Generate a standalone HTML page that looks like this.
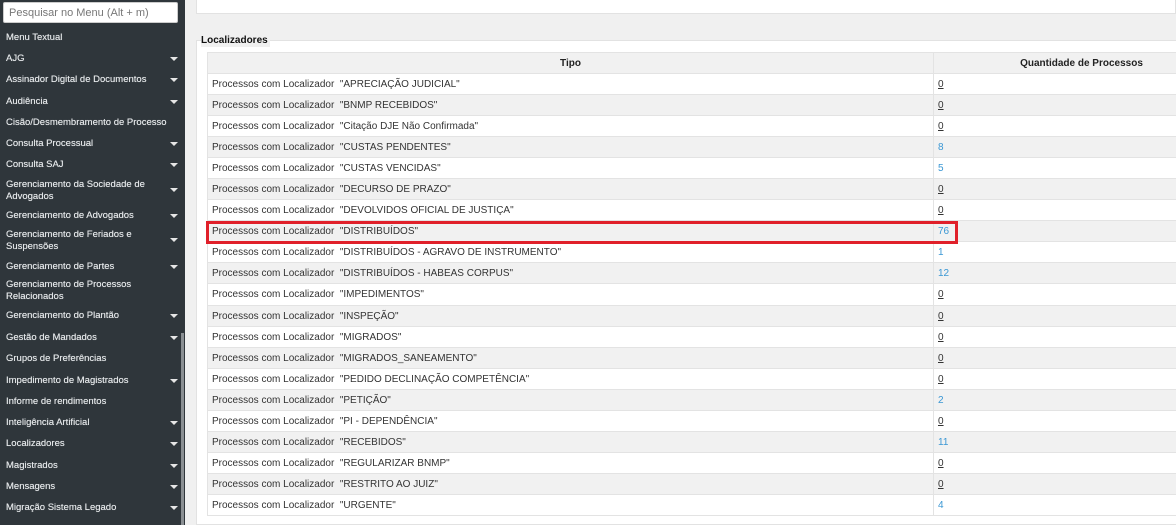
<!DOCTYPE html>
<html><head><meta charset="utf-8"><style>
*{margin:0;padding:0;box-sizing:border-box}
body{width:1176px;height:525px;overflow:hidden;background:#f0f0f0;font-family:"Liberation Sans",sans-serif;position:relative}
#sb{position:absolute;left:0;top:0;width:185px;height:525px;background:#2f363b}
#sb input{position:absolute;left:3px;top:2px;width:175px;height:21px;border:1px solid #ccc;border-radius:2px;background:#fff;font:11px "Liberation Sans",sans-serif;color:#777;padding-left:5px}
.mi{position:absolute;left:6px;width:165px;font-size:9.5px;font-weight:normal;color:#e4e7e9;line-height:12px;white-space:nowrap;text-shadow:0 0 0.4px #e4e7e9}
.ar{position:absolute;left:170px;width:0;height:0;border-left:4px solid transparent;border-right:4px solid transparent;border-top:4px solid #e6e6e6}
#scr{position:absolute;left:181px;top:333px;width:3px;height:192px;background:#8a8f93}
#card{position:absolute;left:196px;top:0;width:980px;height:14px;background:#fff;border:1px solid #e2e2e2;border-top:none}
#fs{position:absolute;left:196px;top:40px;width:985px;height:485px;border:1px solid #e2e2e2;background:#fff}
#leg{position:absolute;left:201px;top:34px;font-size:10px;font-weight:bold;color:#111;background:#f0f0f0;padding-right:2px;line-height:13px}
table{position:absolute;left:207px;top:52px;width:1023px;border-collapse:collapse;font-size:10px;color:#333}
td,th{height:21.1px;border:1px solid #e3e3e3;padding:1px 4px 0;white-space:pre}
th{background:#f1f1f1;font-weight:bold;color:#222;text-align:center;height:20.5px}
tr:nth-child(odd) td{background:#f1f1f1}
td.q{width:296px}
.z{text-decoration:underline;color:#333}
.b{color:#3a97d4}
#red{position:absolute;left:206px;top:221px;width:752px;height:23px;border:3px solid #e0202a}
</style></head><body>
<div id="sb">
<input value="Pesquisar no Menu (Alt + m)">
<div class="mi" style="top:32px">Menu Textual</div>
<div class="mi" style="top:53px">AJG</div><div class="ar" style="top:57px"></div>
<div class="mi" style="top:74px">Assinador Digital de Documentos</div><div class="ar" style="top:78px"></div>
<div class="mi" style="top:96px">Audiência</div><div class="ar" style="top:100px"></div>
<div class="mi" style="top:117px">Cisão/Desmembramento de Processo</div>
<div class="mi" style="top:138px">Consulta Processual</div><div class="ar" style="top:142px"></div>
<div class="mi" style="top:159px">Consulta SAJ</div><div class="ar" style="top:163px"></div>
<div class="mi" style="top:179px">Gerenciamento da Sociedade de<br>Advogados</div><div class="ar" style="top:188px"></div>
<div class="mi" style="top:210px">Gerenciamento de Advogados</div><div class="ar" style="top:214px"></div>
<div class="mi" style="top:229px">Gerenciamento de Feriados e<br>Suspensões</div><div class="ar" style="top:238px"></div>
<div class="mi" style="top:261px">Gerenciamento de Partes</div><div class="ar" style="top:265px"></div>
<div class="mi" style="top:279px">Gerenciamento de Processos<br>Relacionados</div>
<div class="mi" style="top:310px">Gerenciamento do Plantão</div><div class="ar" style="top:314px"></div>
<div class="mi" style="top:332px">Gestão de Mandados</div><div class="ar" style="top:336px"></div>
<div class="mi" style="top:353px">Grupos de Preferências</div>
<div class="mi" style="top:375px">Impedimento de Magistrados</div><div class="ar" style="top:379px"></div>
<div class="mi" style="top:396px">Informe de rendimentos</div>
<div class="mi" style="top:417px">Inteligência Artificial</div><div class="ar" style="top:421px"></div>
<div class="mi" style="top:438px">Localizadores</div><div class="ar" style="top:442px"></div>
<div class="mi" style="top:460px">Magistrados</div><div class="ar" style="top:464px"></div>
<div class="mi" style="top:481px">Mensagens</div><div class="ar" style="top:485px"></div>
<div class="mi" style="top:502px">Migração Sistema Legado</div><div class="ar" style="top:506px"></div>
<div id="scr"></div>
</div>
<div id="card"></div>
<div id="fs"></div>
<div id="leg">Localizadores</div>
<table>
<tr><th>Tipo</th><th>Quantidade de Processos</th></tr>
<tr><td>Processos com Localizador  "APRECIAÇÃO JUDICIAL"</td><td class="q"><span class="z">0</span></td></tr>
<tr><td>Processos com Localizador  "BNMP RECEBIDOS"</td><td class="q"><span class="z">0</span></td></tr>
<tr><td>Processos com Localizador  "Citação DJE Não Confirmada"</td><td class="q"><span class="z">0</span></td></tr>
<tr><td>Processos com Localizador  "CUSTAS PENDENTES"</td><td class="q"><span class="b">8</span></td></tr>
<tr><td>Processos com Localizador  "CUSTAS VENCIDAS"</td><td class="q"><span class="b">5</span></td></tr>
<tr><td>Processos com Localizador  "DECURSO DE PRAZO"</td><td class="q"><span class="z">0</span></td></tr>
<tr><td>Processos com Localizador  "DEVOLVIDOS OFICIAL DE JUSTIÇA"</td><td class="q"><span class="z">0</span></td></tr>
<tr><td>Processos com Localizador  "DISTRIBUÍDOS"</td><td class="q"><span class="b">76</span></td></tr>
<tr><td>Processos com Localizador  "DISTRIBUÍDOS - AGRAVO DE INSTRUMENTO"</td><td class="q"><span class="b">1</span></td></tr>
<tr><td>Processos com Localizador  "DISTRIBUÍDOS - HABEAS CORPUS"</td><td class="q"><span class="b">12</span></td></tr>
<tr><td>Processos com Localizador  "IMPEDIMENTOS"</td><td class="q"><span class="z">0</span></td></tr>
<tr><td>Processos com Localizador  "INSPEÇÃO"</td><td class="q"><span class="z">0</span></td></tr>
<tr><td>Processos com Localizador  "MIGRADOS"</td><td class="q"><span class="z">0</span></td></tr>
<tr><td>Processos com Localizador  "MIGRADOS_SANEAMENTO"</td><td class="q"><span class="z">0</span></td></tr>
<tr><td>Processos com Localizador  "PEDIDO DECLINAÇÃO COMPETÊNCIA"</td><td class="q"><span class="z">0</span></td></tr>
<tr><td>Processos com Localizador  "PETIÇÃO"</td><td class="q"><span class="b">2</span></td></tr>
<tr><td>Processos com Localizador  "PI - DEPENDÊNCIA"</td><td class="q"><span class="z">0</span></td></tr>
<tr><td>Processos com Localizador  "RECEBIDOS"</td><td class="q"><span class="b">11</span></td></tr>
<tr><td>Processos com Localizador  "REGULARIZAR BNMP"</td><td class="q"><span class="z">0</span></td></tr>
<tr><td>Processos com Localizador  "RESTRITO AO JUIZ"</td><td class="q"><span class="z">0</span></td></tr>
<tr><td>Processos com Localizador  "URGENTE"</td><td class="q"><span class="b">4</span></td></tr>
</table>
<div id="red"></div>
</body></html>
